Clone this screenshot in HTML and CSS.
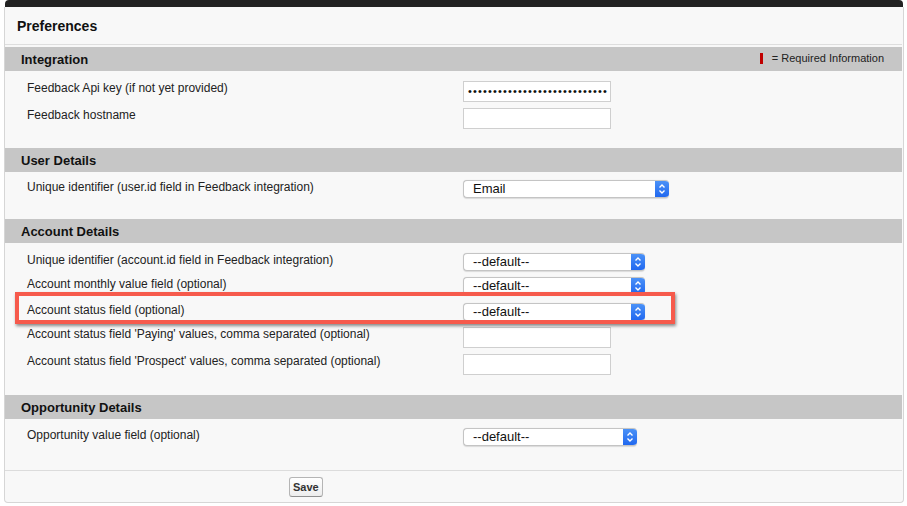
FILE: index.html
```html
<!DOCTYPE html>
<html lang="en">
<head>
<meta charset="utf-8">
<title>Preferences</title>
<link rel="stylesheet" href="styles.css">
</head>
<body>
<div class="page">
  <div class="topbar"></div>
  <div class="panel">
    <div class="title">Preferences</div>

    <section class="section">
      <div class="sec-head">
        <h3>Integration</h3>
        <span class="req"><i class="req-bar"></i>= Required Information</span>
      </div>
      <div class="sec-body body-int">
        <div class="row">
          <label>Feedback Api key (if not yet provided)</label>
          <div class="input pw"><span>••••••••••••••••••••••••••••</span></div>
        </div>
        <div class="row">
          <label>Feedback hostname</label>
          <div class="input"></div>
        </div>
      </div>
    </section>

    <section class="section">
      <div class="sec-head"><h3>User Details</h3></div>
      <div class="sec-body body-user">
        <div class="row">
          <label>Unique identifier (user.id field in Feedback integration)</label>
          <div class="select sel-wide"><span class="sel-text">Email</span><span class="sel-arrow"><svg width="14" height="18" viewBox="0 0 14 18"><path d="M4.5 7.5 L7 5 L9.5 7.5 M4.5 10.5 L7 13 L9.5 10.5" fill="none" stroke="#fff" stroke-width="1.4"/></svg></span></div>
        </div>
      </div>
    </section>

    <section class="section">
      <div class="sec-head"><h3>Account Details</h3></div>
      <div class="sec-body body-acct">
        <div class="row">
          <label>Unique identifier (account.id field in Feedback integration)</label>
          <div class="select"><span class="sel-text">--default--</span><span class="sel-arrow"><svg width="14" height="18" viewBox="0 0 14 18"><path d="M4.5 7.5 L7 5 L9.5 7.5 M4.5 10.5 L7 13 L9.5 10.5" fill="none" stroke="#fff" stroke-width="1.4"/></svg></span></div>
        </div>
        <div class="row">
          <label>Account monthly value field (optional)</label>
          <div class="select"><span class="sel-text">--default--</span><span class="sel-arrow"><svg width="14" height="18" viewBox="0 0 14 18"><path d="M4.5 7.5 L7 5 L9.5 7.5 M4.5 10.5 L7 13 L9.5 10.5" fill="none" stroke="#fff" stroke-width="1.4"/></svg></span></div>
        </div>
        <div class="row row-highlight">
          <label>Account status field (optional)</label>
          <div class="select"><span class="sel-text">--default--</span><span class="sel-arrow"><svg width="14" height="18" viewBox="0 0 14 18"><path d="M4.5 7.5 L7 5 L9.5 7.5 M4.5 10.5 L7 13 L9.5 10.5" fill="none" stroke="#fff" stroke-width="1.4"/></svg></span></div>
          <div class="highlight"></div>
        </div>
        <div class="row">
          <label>Account status field 'Paying' values, comma separated (optional)</label>
          <div class="input"></div>
        </div>
        <div class="row">
          <label>Account status field 'Prospect' values, comma separated (optional)</label>
          <div class="input"></div>
        </div>
      </div>
    </section>

    <section class="section">
      <div class="sec-head"><h3>Opportunity Details</h3></div>
      <div class="sec-body body-opp">
        <div class="row">
          <label>Opportunity value field (optional)</label>
          <div class="select sel-narrow"><span class="sel-text">--default--</span><span class="sel-arrow"><svg width="14" height="18" viewBox="0 0 14 18"><path d="M4.5 7.5 L7 5 L9.5 7.5 M4.5 10.5 L7 13 L9.5 10.5" fill="none" stroke="#fff" stroke-width="1.4"/></svg></span></div>
        </div>
      </div>
    </section>

    <div class="footer"><button class="btn" type="button">Save</button></div>
  </div>
</div>
</body>
</html>
```

FILE: styles.css
```css
* { box-sizing: border-box; }

body {
  margin: 0;
  background: #ffffff;
  font-family: "Liberation Sans", Arial, sans-serif;
  color: #222;
}

.page {
  margin-left: 4px;
  width: 900px;
}

.topbar {
  height: 7px;
  margin-left: 1px;
  margin-right: 1px;
  background: #222;
  border-radius: 4px 4px 0 0;
}

.panel {
  background: #f8f8f8;
  border: 1px solid #d6d6d6;
  border-top: none;
  border-radius: 0 0 4px 4px;
  padding-right: 1px;
}

.title {
  height: 38px;
  line-height: 38px;
  padding-left: 12px;
  font-size: 14px;
  font-weight: bold;
  color: #111;
  border-bottom: 1px solid #dedede;
  margin-bottom: 2px;
}

.sec-head {
  height: 24px;
  background: #c6c6c6;
  display: flex;
  align-items: center;
  justify-content: space-between;
  padding: 0 18px 0 16px;
}

.sec-head h3 {
  margin: 0;
  font-size: 13px;
  font-weight: bold;
  color: #111;
}

.req {
  display: flex;
  align-items: center;
  font-size: 11px;
  color: #222;
  margin-top: -2px;
}

.req-bar {
  display: block;
  width: 3px;
  height: 11px;
  background: #c00000;
  margin-right: 9px;
}

.sec-body {
  padding-left: 22px;
  display: flex;
  flex-direction: column;
  gap: 6px;
}

.body-int { padding-top: 10px; padding-bottom: 19px; }
.body-user { padding-top: 8px; padding-bottom: 21px; }
.body-acct { padding-top: 10px; padding-bottom: 20px; }
.body-opp { padding-top: 9px; padding-bottom: 24px; }

.row {
  display: grid;
  grid-template-columns: 436px auto;
  align-items: start;
}

.row label {
  font-size: 12px;
  line-height: 14px;
  color: #222;
}

.input {
  width: 148px;
  height: 21px;
  background: #fff;
  border: 1px solid #cfcfcf;
}

.pw {
  display: flex;
  justify-content: flex-end;
  align-items: center;
  padding-right: 2px;
}

.pw span {
  font-size: 11px;
  letter-spacing: 1.15px;
  line-height: 19px;
  color: #111;
  white-space: nowrap;
}

.select {
  width: 182px;
  height: 18px;
  display: flex;
  background: #fff;
  border: 1px solid #c4c4c4;
  border-right: none;
  border-radius: 4px;
  overflow: hidden;
  box-shadow: 0 0.5px 1px rgba(0,0,0,0.12);
}

.sel-wide { width: 206px; }
.sel-narrow { width: 174px; }

.sel-text {
  flex: 1;
  font-size: 13px;
  line-height: 16px;
  padding-left: 9px;
  color: #111;
}

.sel-arrow {
  width: 14px;
  margin-top: -1px;
  margin-bottom: -1px;
  background: linear-gradient(#4d94f8, #1f66ef);
  display: flex;
  align-items: center;
  justify-content: center;
}

.sel-arrow svg { display: block; }

.row-highlight {
  position: relative;
  margin-top: 2px;
}

.highlight {
  position: absolute;
  left: -12px;
  top: -11px;
  width: 660px;
  height: 32px;
  border: 4px solid #f65a4c;
  box-shadow: 1px 2px 3px rgba(0,0,0,0.45);
}

.footer {
  border-top: 1px solid #dcdcdc;
  padding: 6px 0 5px 284px;
}

.btn {
  display: block;
  height: 20px;
  padding: 0 3px;
  font-family: "Liberation Sans", Arial, sans-serif;
  font-size: 11px;
  font-weight: bold;
  color: #333;
  background: linear-gradient(#ffffff, #ededed);
  border: 1px solid #b5b5b5;
  border-bottom-color: #8f8f8f;
  border-radius: 3px;
}
```
